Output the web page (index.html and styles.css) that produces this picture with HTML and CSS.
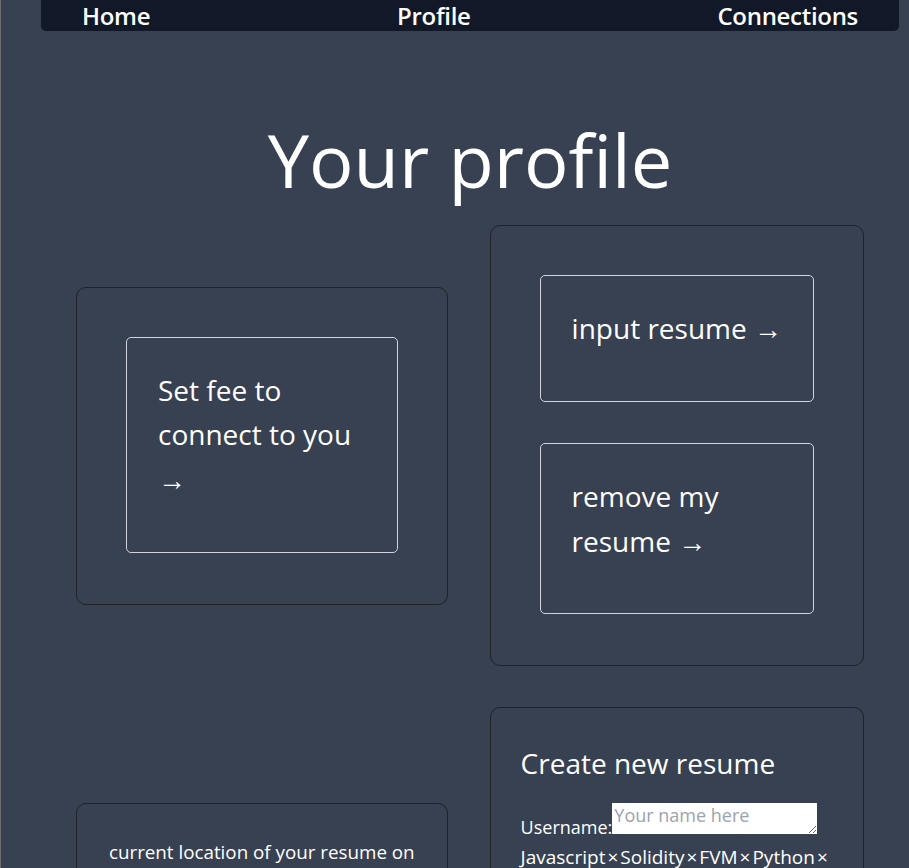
FILE: index.html
```html
<!DOCTYPE html>
<html lang="en">
<head>
<meta charset="utf-8">
<title>Your profile</title>
<link rel="stylesheet" href="styles.css">
</head>
<body>
<div class="page">
  <nav class="nav">
    <a class="nav-link" href="#">Home</a>
    <a class="nav-link" href="#">Profile</a>
    <a class="nav-link" href="#">Connections</a>
  </nav>
  <h1 class="title">Your profile</h1>
  <div class="grid">
    <div class="card card-fee">
      <a class="action" href="#">Set fee to connect to you →</a>
    </div>
    <div class="card card-actions">
      <a class="action action-single" href="#">input resume →</a>
      <a class="action" href="#">remove my resume →</a>
    </div>
    <div class="card card-location">
      <p class="location-text">current location of your resume on IPFS:</p>
      <p class="location-link">No resume uploaded yet</p>
    </div>
    <div class="card card-create">
      <h2 class="create-title">Create new resume</h2>
      <div class="field">
        <label class="field-label">Username:</label><textarea class="field-input" placeholder="Your name here"></textarea>
      </div>
      <div class="tags">
        <span class="tag">Javascript<span class="tag-x">×</span></span><span class="tag">Solidity<span class="tag-x">×</span></span><span class="tag">FVM<span class="tag-x">×</span></span><span class="tag">Python<span class="tag-x">×</span></span>
      </div>
      <div class="field">
        <label class="field-label">Description:</label><textarea class="field-input" placeholder="About you"></textarea>
      </div>
      <button class="submit" type="button">Create</button>
    </div>
  </div>
</div>
</body>
</html>
```
FILE: styles.css
```css
html {
  background: #374151;
}
body {
  margin: 0;
  border-left: 1px solid #6e6e6e;
  min-height: 100vh;
  background: #374151;
  color: #ffffff;
  font-family: "Open Sans", "Noto Sans", sans-serif;
}
.page {
  padding: 0 10px 40px 40px;
}
.nav {
  display: flex;
  justify-content: space-between;
  align-items: center;
  height: 31px;
  padding: 0 41px 0 41px;
  background: #111827;
  border-radius: 0 0 5px 5px;
}
.nav-link {
  color: #ffffff;
  text-decoration: none;
  font-size: 24px;
  font-weight: 600;
  line-height: 31px;
  letter-spacing: -0.3px;
}
.title {
  margin: 0;
  padding: 89px 0 25px;
  text-align: center;
  font-size: 74px;
  font-weight: 400;
  line-height: 80px;
}
.grid {
  display: grid;
  grid-template-columns: 1fr 1fr;
  column-gap: 42px;
  row-gap: 41px;
  align-items: center;
  padding: 0 35px;
}
.card {
  border: 1px solid #1f2226;
  border-radius: 10px;
  padding: 49px 49px 51px;
}
.card-actions {
  display: flex;
  flex-direction: column;
  align-items: flex-start;
  gap: 41px;
}
.action {
  display: block;
  width: fit-content;
  max-width: 100%;
  box-sizing: border-box;
  border: 1px solid #d1d5db;
  border-radius: 5px;
  padding: 30px 31px 50px;
  color: #ffffff;
  text-decoration: none;
  font-size: 28px;
  line-height: 44.8px;
}
.action-single {
  white-space: nowrap;
}
.card-fee .action {
  width: 100%;
}
.card-location {
  min-height: 330px;
  padding: 34px 30px 30px;
  box-sizing: border-box;
  text-align: center;
  font-size: 18.8px;
  line-height: 28px;
}
.location-text {
  margin: 0;
}
.location-link {
  margin: 8px 0 0;
  color: #d1d5db;
}
.card-create {
  min-height: 522px;
  padding: 30px;
  box-sizing: border-box;
  font-size: 18px;
  line-height: 30px;
}
.create-title {
  margin: 5px 0 20px;
  font-size: 28px;
  font-weight: 400;
  line-height: 40px;
}
.field {
  display: flex;
  align-items: flex-end;
  line-height: normal;
}
.field-input {
  width: 205px;
  height: 31px;
  box-sizing: border-box;
  border: 0;
  padding: 0 2px;
  margin: 0 0 5px;
  font-family: inherit;
  font-size: 18px;
  line-height: 24px;
  color: #111827;
  background: #ffffff;
}
.field-input::placeholder {
  color: #9ca3af;
}
.tags {
  margin: 3px 0 0;
  font-size: 19px;
  line-height: 30px;
}
.tag-x {
  margin: 0 2px;
}
.submit {
  margin-top: 16px;
  padding: 6px 18px;
  border: 1px solid #d1d5db;
  border-radius: 5px;
  background: transparent;
  color: #ffffff;
  font-family: inherit;
  font-size: 18px;
}
```
